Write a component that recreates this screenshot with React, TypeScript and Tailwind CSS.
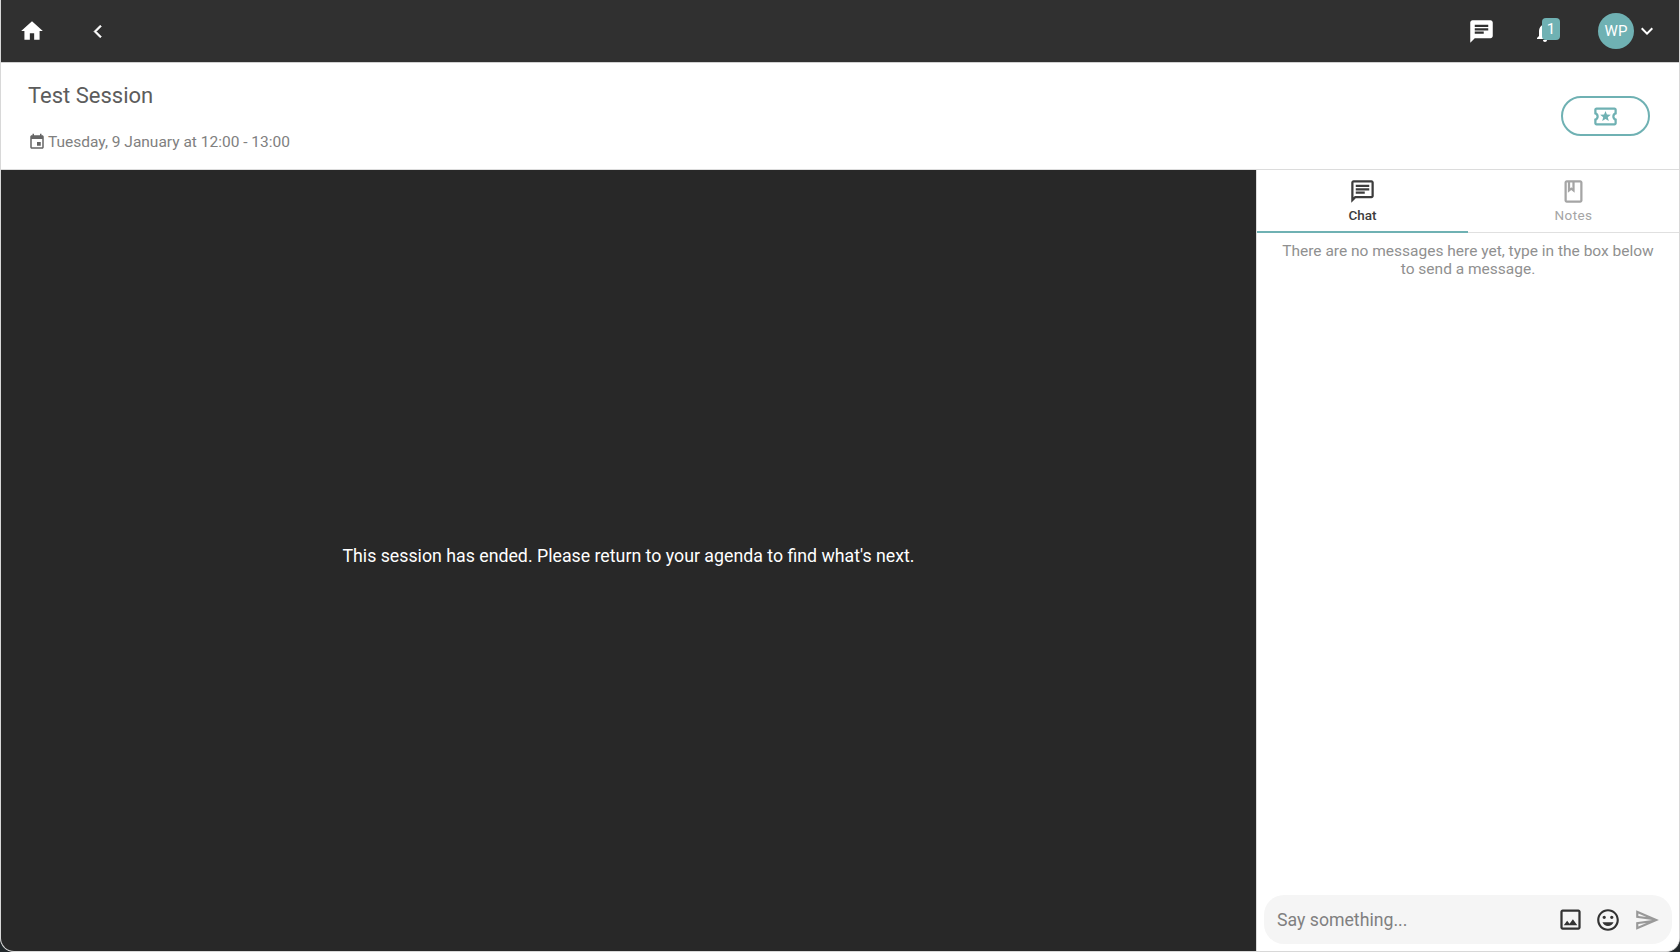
const teal = '#6fb1b3';

function Icon({ d, size = 24, className = '' }: { d: string; size?: number; className?: string }) {
  return (
    <svg width={size} height={size} viewBox="0 0 24 24" fill="currentColor" className={className}>
      <path d={d} />
    </svg>
  );
}

const icons = {
  home: 'M10 20v-6h4v6h5v-8h3L12 3 2 12h3v8z',
  back: 'M11.67 3.87L9.9 2.1 0 12l9.9 9.9 1.77-1.77L3.54 12z',
  chat: 'M20 2H4c-1.1 0-1.99.9-1.99 2L2 22l4-4h14c1.1 0 2-.9 2-2V4c0-1.1-.9-2-2-2zM6 9h12v2H6V9zm8 5H6v-2h8v2zm4-6H6V6h12v2z',
  bell: 'M12 22c1.1 0 2-.9 2-2h-4c0 1.1.89 2 2 2zm6-6v-5c0-3.07-1.64-5.64-4.5-6.32V4c0-.83-.67-1.5-1.5-1.5s-1.5.67-1.5 1.5v.68C7.63 5.36 6 7.92 6 11v5l-2 2v1h16v-1l-2-2z',
  expand: 'M16.59 8.59L12 13.17 7.41 8.59 6 10l6 6 6-6z',
  ticket:
    'M22 10V6c0-1.11-.9-2-2-2H4c-1.1 0-1.99.89-1.99 2v4c1.1 0 1.99.9 1.99 2s-.89 2-2 2v4c0 1.1.9 2 2 2h16c1.1 0 2-.9 2-2v-4c-1.1 0-2-.9-2-2s.9-2 2-2zm-2-1.46c-1.19.69-2 1.99-2 3.46s.81 2.77 2 3.46V18H4v-2.54c1.19-.69 2-1.99 2-3.46 0-1.48-.8-2.77-1.99-3.46L4 6h16v2.54zM9.07 16L12 14.12 14.93 16l-.89-3.36 2.69-2.2-3.47-.21L12 7l-1.27 3.22-3.47.21 2.69 2.2z',
  event: 'M17 12h-5v5h5v-5zM16 1v2H8V1H6v2H5c-1.11 0-1.99.9-1.99 2L3 19c0 1.1.89 2 2 2h14c1.1 0 2-.9 2-2V5c0-1.1-.9-2-2-2h-1V1h-2zm3 18H5V8h14v11z',
  chatOutline:
    'M20 2H4c-1.1 0-1.99.9-1.99 2L2 22l4-4h14c1.1 0 2-.9 2-2V4c0-1.1-.9-2-2-2zm0 14H5.17L4 17.17V4h16v12zM6 12h8v2H6zm0-3h12v2H6zm0-3h12v2H6z',
  book: 'M18 2H6c-1.1 0-2 .9-2 2v16c0 1.1.9 2 2 2h12c1.1 0 2-.9 2-2V4c0-1.1-.9-2-2-2zM9 4h2v5l-1-.75L9 9V4zm9 16H6V4h1v9l3-2.25L13 13V4h5v16z',
  image:
    'M19 5v14H5V5h14m0-2H5c-1.1 0-2 .9-2 2v14c0 1.1.9 2 2 2h14c1.1 0 2-.9 2-2V5c0-1.1-.9-2-2-2zm-4.86 8.86l-3 3.87L9 13.14 6 17h12l-3.86-5.14z',
  smile:
    'M11.99 2C6.47 2 2 6.48 2 12s4.47 10 9.99 10C17.52 22 22 17.52 22 12S17.52 2 11.99 2zM12 20c-4.42 0-8-3.58-8-8s3.58-8 8-8 8 3.58 8 8-3.58 8-8 8zm3.5-9c.83 0 1.5-.67 1.5-1.5S16.33 8 15.5 8 14 8.67 14 9.5s.67 1.5 1.5 1.5zm-7 0c.83 0 1.5-.67 1.5-1.5S9.33 8 8.5 8 7 8.67 7 9.5 7.67 11 8.5 11zm3.5 6.5c2.33 0 4.31-1.46 5.11-3.5H6.89c.8 2.04 2.78 3.5 5.11 3.5z',
  send: 'M4.01 6.03l7.51 3.22-7.52-1 .01-2.22m7.5 8.72L4 17.97v-2.22l7.51-1M2.01 3L2 10l15 2-15 2 .01 7L23 12 2.01 3z',
};

export default function App() {
  return (
    <div className="h-[952px] w-[1680px] overflow-hidden bg-[#22282b] font-['Roboto',sans-serif]">
      <div className="flex h-full flex-col overflow-hidden rounded-b-[14px] border-x border-b border-[#d8d8d8] bg-white">
        {/* Top bar */}
        <header className="flex h-[63px] shrink-0 items-center border-b border-[#d0d0d0] bg-[#303030] text-white">
          <Icon d={icons.home} size={26} className="ml-[18px]" />
          <Icon d={icons.back} size={15} className="ml-[49px] overflow-visible stroke-current stroke-[1.2]" />
          <div className="ml-auto flex items-center">
            <Icon d={icons.chat} size={27} />
            <div className="relative ml-[38px] mt-[2px] h-6 w-6">
              <Icon d={icons.bell} size={24} />
              <span className="absolute left-[9px] top-[-2px] flex h-[22px] w-[18px] items-center justify-center rounded-[4px] bg-[#6fb1b3] text-[15px]">
                1
              </span>
            </div>
            <div className="ml-[41px] flex h-9 w-9 items-center justify-center rounded-full bg-[#6fb1b3] text-[15px]">
              WP
            </div>
            <Icon d={icons.expand} size={24} className="ml-[1px] mr-[20px]" />
          </div>
        </header>

        {/* Session title */}
        <section className="flex h-[107px] shrink-0 items-center justify-between border-b border-[#dcdcdc] pl-[27px] pr-[29px]">
          <div className="pt-[2px]">
            <h1 className="text-[22px] leading-[26px] text-[#5c5c5c]">Test Session</h1>
            <p className="mt-[23px] flex items-center text-[15.5px] leading-[20px] text-[#808080]">
              <Icon d={icons.event} size={18} className="mr-[2px] text-[#666666]" />
              Tuesday, 9 January at 12:00 - 13:00
            </p>
          </div>
          <button className="flex h-10 w-[89px] items-center justify-center rounded-full border-2 border-[#6fb1b3]" style={{ color: teal }}>
            <Icon d={icons.ticket} size={27} />
          </button>
        </section>

        <main className="flex min-h-0 flex-1">
          {/* Video area */}
          <div className="flex flex-1 items-center justify-center bg-[#282828] pb-[9px]">
            <p className="text-[17.75px] text-white">This session has ended. Please return to your agenda to find what's next.</p>
          </div>

          {/* Side panel */}
          <aside className="flex w-[423px] shrink-0 flex-col border-l border-[#dcdcdc] bg-white">
            <div className="flex h-[63px] shrink-0 border-b border-[#e0e0e0]">
              <div className="-mb-px flex w-1/2 flex-col items-center border-b-2 border-[#6fb1b3] pt-[8px] text-[#3c3c3c]">
                <Icon d={icons.chatOutline} size={27} />
                <span className="mt-[2px] text-[13.5px] font-medium leading-[16px]">Chat</span>
              </div>
              <div className="flex w-1/2 flex-col items-center pt-[8px] text-[#a5a5a5]">
                <Icon d={icons.book} size={27} />
                <span className="mt-[2px] text-[13.5px] leading-[16px] tracking-[0.4px]">Notes</span>
              </div>
            </div>

            <p className="flex-1 px-6 pt-[9px] text-center text-[15.5px] leading-[18px] text-[#909090]">
              There are no messages here yet, type in the box below to send a message.
            </p>

            <div className="mx-[7px] mb-[7px] flex h-[49px] shrink-0 items-center rounded-[20px] bg-[#f5f5f5] pl-[13px] pr-[12px]">
              <span className="flex-1 pt-px text-[17.7px] text-[#808080]">Say something...</span>
              <Icon d={icons.image} size={27} className="text-[#333333]" />
              <Icon d={icons.smile} size={26} className="ml-[11px] text-[#333333]" />
              <Icon d={icons.send} size={26} className="ml-[13px] text-[#999999]" />
            </div>
          </aside>
        </main>
      </div>
    </div>
  );
}
